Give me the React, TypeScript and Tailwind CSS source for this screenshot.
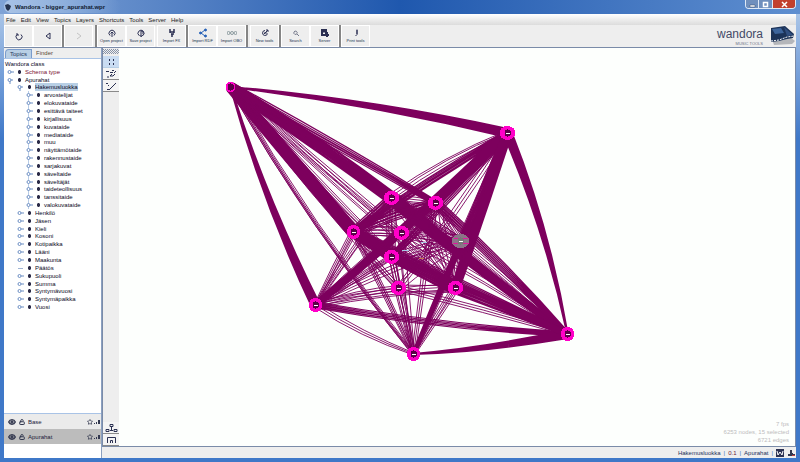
import React, { useMemo, useState } from "react";
import { Eye, LockOpen, Star } from "lucide-react";

/* ---------- graph data ---------- */

type GraphNode = { id: string; x: number; y: number; r: number; dim?: boolean };

// from, to, bend, width at start, width at end, number of strands
type Bundle = [string, string, number, number, number, number];

const NODES: GraphNode[] = [
  { id: "A", x: 231, y: 87, r: 5 },
  { id: "B", x: 508, y: 133, r: 8 },
  { id: "C", x: 392, y: 198, r: 8 },
  { id: "D", x: 436, y: 203, r: 8 },
  { id: "E", x: 354, y: 232, r: 7 },
  { id: "F", x: 402, y: 233, r: 8 },
  { id: "G", x: 461, y: 241, r: 9, dim: true },
  { id: "H", x: 392, y: 257, r: 8 },
  { id: "I", x: 399, y: 288, r: 8 },
  { id: "J", x: 456, y: 288, r: 8 },
  { id: "K", x: 316, y: 305, r: 7 },
  { id: "L", x: 568, y: 334, r: 7 },
  { id: "M", x: 414, y: 354, r: 7 },
];

const BUNDLES: Bundle[] = [
  ["A", "B", -4, 1, 9, 12],
  ["A", "K", 5, 1, 9, 12],
  ["B", "L", -5, 9, 1, 12],
  ["K", "L", 4, 6, 4, 7],
  ["K", "M", 3, 5, 2, 3],
  ["M", "L", 3, 1, 9, 11],
  ["A", "C", -2, 10, 12, 18],
  ["A", "D", -1, 9, 5, 7],
  ["A", "E", 0, 10, 12, 18],
  ["A", "F", 1, 6, 6, 4],
  ["A", "G", 0, 6, 6, 3],
  ["A", "H", 2, 7, 7, 6],
  ["A", "I", 3, 4, 5, 3],
  ["A", "J", 1, 6, 8, 4],
  ["A", "M", 7, 4, 3, 6],
  ["B", "C", 4, 5, 9, 4],
  ["B", "D", 0, 9, 7, 11],
  ["B", "E", 2, 6, 7, 9],
  ["B", "F", -2, 5, 4, 4],
  ["B", "G", 0, 8, 7, 6],
  ["B", "H", -1, 7, 6, 7],
  ["B", "I", -2, 5, 5, 3],
  ["B", "J", 0, 9, 8, 13],
  ["B", "K", -2, 10, 6, 14],
  ["B", "M", 0, 7, 3, 8],
  ["C", "L", 2, 13, 5, 17],
  ["D", "L", -2, 9, 4, 8],
  ["E", "L", 1, 10, 5, 9],
  ["F", "L", -3, 12, 4, 4],
  ["G", "L", -1, 6, 3, 4],
  ["H", "L", 1, 6, 5, 4],
  ["I", "L", -1, 5, 3, 3],
  ["J", "L", 0, 11, 5, 12],
  ["K", "C", -1, 3, 5, 4],
  ["K", "D", -2, 4, 6, 5],
  ["K", "E", 0, 3, 6, 5],
  ["K", "F", 2, 4, 4, 4],
  ["K", "G", -2, 3, 8, 3],
  ["K", "H", 0, 5, 5, 6],
  ["K", "I", -2, 3, 5, 3],
  ["K", "J", -3, 6, 8, 4],
  ["M", "C", -2, 3, 5, 2],
  ["M", "D", -1, 3, 5, 3],
  ["M", "E", 1, 3, 5, 5],
  ["M", "F", 0, 2, 5, 2],
  ["M", "G", 2, 3, 5, 2],
  ["M", "H", 0, 2, 5, 3],
  ["M", "I", 0, 2, 8, 3],
  ["M", "J", 0, 3, 7, 5],
  ["C", "D", 0, 6, 6, 4],
  ["C", "E", 0, 8, 8, 7],
  ["C", "G", 0, 8, 6, 6],
  ["C", "H", 1, 8, 8, 4],
  ["C", "J", -2, 9, 9, 4],
  ["D", "E", 2, 9, 9, 7],
  ["D", "F", 1, 8, 8, 6],
  ["D", "G", 0, 6, 6, 5],
  ["D", "J", 3, 12, 9, 4],
  ["E", "F", -1, 8, 8, 4],
  ["E", "G", -4, 9, 9, 4],
  ["E", "H", 0, 10, 10, 11],
  ["E", "I", 2, 5, 5, 4],
  ["E", "J", 1, 10, 13, 13],
  ["F", "G", 1, 10, 12, 4],
  ["F", "J", -1, 9, 12, 4],
  ["G", "H", 1, 10, 8, 4],
  ["G", "I", 2, 9, 6, 2],
  ["G", "J", 0, 12, 9, 6],
  ["H", "I", 0, 5, 5, 3],
  ["H", "J", 0, 9, 12, 11],
  ["I", "J", 1, 6, 6, 2],
];

function bundlePath([from, to, bend, w0, w1, strands]: Bundle) {
  const a = NODES.find((n) => n.id === from)!;
  const b = NODES.find((n) => n.id === to)!;
  const dx = b.x - a.x;
  const dy = b.y - a.y;
  const len = Math.hypot(dx, dy);
  const nx = -dy / len;
  const ny = dx / len;
  let d = "";
  for (let i = 0; i < strands; i++) {
    const t = i / (strands - 1) - 0.5;
    const s = t * w0;
    const e = t * w1;
    // small repeatable wobble so strands do not run perfectly parallel
    const c = bend * 2 + (s + e) / 2 + (((i * 7) % 5) - 2) / 2;
    const cx = (a.x + b.x) / 2 + nx * c;
    const cy = (a.y + b.y) / 2 + ny * c;
    d += `M${(a.x + nx * s).toFixed(1)} ${(a.y + ny * s).toFixed(1)}`;
    d += `Q${cx.toFixed(1)} ${cy.toFixed(1)} ${(b.x + nx * e).toFixed(1)} ${(b.y + ny * e).toFixed(1)}`;
  }
  return d;
}

function Graph() {
  const paths = useMemo(() => BUNDLES.map(bundlePath), []);
  return (
    <svg className="block h-full w-full" viewBox="120 48 675 398" aria-label="Topic graph" role="img">
      <g fill="none" stroke="#7d005d">
        {paths.map((d, i) => (
          <path key={i} d={d} strokeWidth={BUNDLES[i][5] > 6 ? 1.2 : 0.9} />
        ))}
      </g>
      {NODES.map((n) => (
        <g key={n.id} shapeRendering="crispEdges">
          <ellipse cx={n.x} cy={n.y} rx={n.r} ry={Math.min(n.r, 7)} fill={n.dim ? "#8c7488" : "#ff00c8"} />
          {n.dim && <path d={`M${n.x - 8} ${n.y + 2.5}h16M${n.x - 7} ${n.y - 2.5}h14`} stroke="#e0189f" />}
          <path
            d={`M${n.x} ${n.y - 4}L${n.x + 3} ${n.y - 2}V${n.y + 2}L${n.x} ${n.y + 4}L${n.x - 3} ${n.y + 2}V${n.y - 2}Z`}
            fill={n.dim ? "#777777" : "#5c0048"}
          />
          {n.id !== "A" && <path d={`M${n.x - 2} ${n.y + 0.5}h4`} stroke="#ffffff" />}
        </g>
      ))}
      <path d="M402 250h7M421 242h6" stroke="#a9c8e6" shapeRendering="crispEdges" />
      <path d="M419 258h5" stroke="#c87848" shapeRendering="crispEdges" />
    </svg>
  );
}

/* ---------- title bar ---------- */

function TitleBar() {
  return (
    <header className="flex h-[14px] shrink-0 items-start justify-between bg-linear-to-r from-[#7fa3d6] via-[#1f58ae] to-[#5f8fd0] pl-1">
      <div className="flex h-[13px] items-center gap-[3px] rounded-full bg-linear-to-r from-[#a9c3e6] via-[#8fb0dd] to-transparent pr-4">
        <svg className="h-2 w-2" viewBox="0 0 8 8" aria-hidden="true">
          <path d="M1 2l3-1 3 2-1 3-2 2-2-2z" fill="#26344f" />
        </svg>
        <h1 className="text-[6px] leading-none font-bold text-[#101c30]">Wandora - bigger_apurahat.wpr</h1>
      </div>
      <div className="mr-1 flex h-[9px] overflow-hidden rounded-b-sm border border-t-0 border-[#dfe9f6] text-white">
        <button type="button" aria-label="Minimize" className="flex w-[13px] items-center justify-center border-r border-[#dfe9f6] bg-[#6f8fbd]">
          <svg className="h-[7px] w-[9px]" viewBox="0 0 9 7"><path d="M2 4h5v2H2z" fill="#fff" stroke="#34496b" strokeWidth=".5" /></svg>
        </button>
        <button type="button" aria-label="Maximize" className="flex w-[14px] items-center justify-center border-r border-[#dfe9f6] bg-[#6f8fbd]">
          <svg className="h-[7px] w-[9px]" viewBox="0 0 9 7"><path d="M2.500 1.500h4v4h-4z" fill="none" stroke="#fff" strokeWidth="1.500" /></svg>
        </button>
        <button type="button" aria-label="Close" className="flex w-[22px] items-center justify-center bg-[#c2402e]">
          <svg className="h-[7px] w-[9px]" viewBox="0 0 9 7"><path d="M2 1l5 5M7 1l-5 5" stroke="#fff" strokeWidth="1.500" /></svg>
        </button>
      </div>
    </header>
  );
}

const MENUS = ["File", "Edit", "View", "Topics", "Layers", "Shortcuts", "Tools", "Server", "Help"];

function MenuBar() {
  return (
    <nav className="flex h-[11px] shrink-0 items-center gap-[5px] bg-linear-to-b from-white to-[#dcdcdc] px-[2px]">
      {MENUS.map((m) => (
        <button key={m} type="button" className="text-[6px] leading-none text-[#222222]">
          {m}
        </button>
      ))}
    </nav>
  );
}

/* ---------- toolbar ---------- */

const ICONS: Record<string, React.ReactNode> = {
  reload: <path d="M7 3.500A3 3 0 1 1 3.500 3.200M2 3h2v2" />,
  back: <path d="M7 2v6L3 5z" />,
  forward: <path d="M3 2l4 3-4 3" stroke="#c4c4c4" />,
  open: <path d="M3 7.500A3 3 0 1 1 7 7.500M5 9V4M3.500 5.500L5 4l1.500 1.500" />,
  save: <path d="M3 7.500A3 3 0 1 1 7 7.500M5 3v6M3.500 7L5 8.500 7 7M5 3h2v3" />,
  fx: <path d="M2 2h2M6 2h2M3 4h4M4 6h3M5 6v3M3 3v2M7 3v2" strokeWidth="1.500" />,
  rdf: (
    <g stroke="#2460b8" fill="#2460b8">
      <path d="M3 5l4-3M3 5l4 3" fill="none" />
      <circle cx="2.500" cy="5" r="1" />
      <circle cx="7.500" cy="2" r="1" />
      <circle cx="7.500" cy="8" r="1" />
    </g>
  ),
  obo: (
    <g stroke="#8b9a9e">
      <circle cx="1.500" cy="5" r="1.500" />
      <circle cx="5" cy="5" r="1.500" />
      <circle cx="8.500" cy="5" r="1.500" />
    </g>
  ),
  tools: <path d="M5 2.500a2.500 2.500 0 1 0 2.500 3M4 6l4-4M6 2h2v2M4 5h3" />,
  search: <path d="M3 4a1.500 1.500 0 1 1 3 1.500A1.500 1.500 0 0 1 3 4M6 6l2 2" stroke="#777b8c" />,
  server: <path d="M2 2h4v5H2zM3 3.500h2M7 4v5M5 7h4" strokeWidth="2" />,
  print: <path d="M6 1.500v5L4.500 8M6 2v4" />,
};

type Tool = { icon: string; label?: string; name: string };

const TOOL_GROUPS: (Tool | "|")[][] = [
  [{ icon: "reload", name: "Reload" }, { icon: "back", name: "Back" }, "|", { icon: "forward", name: "Forward" }],
  ["|", { icon: "open", label: "Open project", name: "Open project" }, { icon: "save", label: "Save project", name: "Save project" }],
  [
    { icon: "fx", label: "Import FX", name: "Import FX" },
    "|",
    { icon: "rdf", label: "Import RDF", name: "Import RDF" },
    { icon: "obo", label: "Import OBO", name: "Import OBO" },
    "|",
  ],
  [
    { icon: "tools", label: "New tools", name: "New tools" },
    "|",
    { icon: "search", label: "Search", name: "Search" },
    { icon: "server", label: "Server", name: "Server" },
    "|",
    { icon: "print", label: "Print tools", name: "Print tools" },
  ],
];

function ToolButton({ tool }: { tool: Tool }) {
  return (
    <button
      type="button"
      aria-label={tool.name}
      className="flex w-[29px] flex-col items-center justify-center border border-white bg-[#eeeeee]"
    >
      <svg className="h-[10px] w-[10px]" viewBox="0 0 10 10" fill="none" stroke="#2b2f52" strokeWidth="1" aria-hidden="true">
        {ICONS[tool.icon]}
      </svg>
      {tool.label && <span className="text-[4px] leading-[6px] whitespace-nowrap text-[#20304c]">{tool.label}</span>}
    </button>
  );
}

function Logo() {
  return (
    <div className="flex items-center gap-[6px]">
      <div className="flex flex-col items-end">
        <span className="text-[12px] leading-[14px] text-[#434a66]">wandora</span>
        <span className="text-[4px] leading-[5px] text-[#6a7085]">MUSIC TOOLS</span>
      </div>
      <svg className="h-[20px] w-[27px]" viewBox="0 0 25 20" aria-hidden="true">
        <path d="M2 13l9 1 9-3 5 4-3 3-18 1z" fill="#b4b6ba" />
        <path d="M1 2l14-2 9 8-1 4-6 1-8 2-8 1z" fill="#1c3358" />
        <path d="M2 3l9-1 3 5-9 1z" fill="#3d659c" />
        <path d="M14 1l9 8-6 1z" fill="#304f80" />
        <path d="M1 15l8-1 8-3 7-1" fill="none" stroke="#f4f6fa" strokeDasharray="2 1" />
      </svg>
    </div>
  );
}

function ToolBar() {
  return (
    <div className="flex h-[22px] shrink-0 items-stretch justify-between bg-[#eeeeee]">
      <div className="flex gap-[2px]">
        {TOOL_GROUPS.map((group, g) => (
          <div key={g} className="flex">
            {group.map((t, i) =>
              t === "|" ? <span key={i} className="w-[2px] bg-[#858585]" /> : <ToolButton key={i} tool={t} />
            )}
          </div>
        ))}
      </div>
      <Logo />
    </div>
  );
}

/* ---------- topic tree ---------- */

type Row = { label: string; depth: number; open?: boolean; leaf?: boolean; color?: string };

const child = (label: string): Row => ({ label, depth: 3 });
const top = (label: string): Row => ({ label, depth: 2 });

const ROWS: Row[] = [
  { label: "Wandora class", depth: 0 },
  { label: "Schema type", depth: 1, color: "text-[#7a1030]" },
  { label: "Apurahat", depth: 1, open: true },
  { label: "Hakemusluokka", depth: 2, open: true },
  child("arvostelijat"),
  child("elokuvataide"),
  child("esittävä taiteet"),
  child("kirjallisuus"),
  child("kuvataide"),
  child("mediataide"),
  child("muu"),
  child("näyttämötaide"),
  child("rakennustaide"),
  child("sarjakuvat"),
  child("säveltaide"),
  child("säveltäjät"),
  child("taideteollisuus"),
  child("tanssitaide"),
  child("valokuvataide"),
  top("Henkilö"),
  top("Jäsen"),
  top("Kieli"),
  top("Kosoni"),
  top("Kotipaikka"),
  top("Lääni"),
  top("Maakunta"),
  { label: "Päätös", depth: 2, leaf: true },
  top("Sukupuoli"),
  top("Summa"),
  top("Syntymävuosi"),
  top("Syntymäpaikka"),
  top("Vuosi"),
];

const INDENT = ["pl-px", "pl-[3px]", "pl-[13px]", "pl-[22px]"];

function TreeRow({ row, selected, onSelect }: { row: Row; selected: boolean; onSelect: () => void }) {
  return (
    <li className={`flex min-h-0 items-center ${INDENT[row.depth]}`}>
      {row.depth > 0 && (
        <svg className="h-[8px] w-[17px] shrink-0" viewBox="0 0 17 8" fill="none" aria-hidden="true">
          {row.depth === 3 && <path d="M2.500 0v8" stroke="#b7cbe6" />}
          {row.leaf ? (
            <path d="M1 4.500h5" stroke="#9fb4d4" />
          ) : (
            <>
              <circle cx="2.500" cy="4" r="1.500" stroke="#6d8fc4" fill="#ffffff" />
              <path d={row.open ? "M4 4h2M3 5v3" : "M4 4h3"} stroke="#6d8fc4" />
            </>
          )}
          <path d="M12.500 2v4M11 4h3" stroke="#2b2b48" strokeWidth="2" />
        </svg>
      )}
      <button
        type="button"
        onClick={onSelect}
        className={`h-[8px] text-[6px] leading-[8px] whitespace-nowrap ${row.color ?? "text-[#08081c]"} ${
          selected ? "bg-[#b8cfe5]" : ""
        } ${row.depth > 0 ? "ml-px" : ""}`}
      >
        {row.label}
      </button>
    </li>
  );
}

function Layer({ name, active }: { name: string; active?: boolean }) {
  return (
    <div className={`flex h-[15px] items-center justify-between pr-px pl-1 ${active ? "bg-[#bcbcbc]" : "bg-[#ebebeb]"}`}>
      <div className="flex items-center gap-[3px] text-[#33384f]">
        <Eye size={8} strokeWidth={4} />
        <LockOpen size={6} strokeWidth={4} />
        <span className="text-[6px] leading-[8px] text-[#20203a]">{name}</span>
      </div>
      <div className="flex items-center gap-px text-[#33384f]">
        <Star size={6} strokeWidth={3} />
        <svg className="h-[6px] w-[6px]" viewBox="0 0 6 6" aria-hidden="true">
          <path d="M0 4h1v1H0zM2 3h1v2H2zM4 1h2v4H4z" fill="currentColor" />
        </svg>
      </div>
    </div>
  );
}

function SidePanel() {
  const [selected, setSelected] = useState("Hakemusluokka");
  return (
    <aside className="flex w-[98px] shrink-0 flex-col border-r border-[#8ba0c0] bg-white">
      <div className="flex h-[11px] items-end gap-1 border-b border-[#a9c3e6] bg-[#eeeeee] pl-px text-[6px]" role="tablist">
        <button type="button" role="tab" aria-selected="true" className="h-[9px] w-[27px] rounded-tl-sm border border-b-0 border-[#7a9ccc] bg-[#b8cfe5] leading-[8px] text-[#26375c]">
          Topics
        </button>
        <button type="button" role="tab" aria-selected="false" className="h-[9px] leading-[9px] text-[#5a4a38]">
          Finder
        </button>
      </div>
      <ul className="mt-px grid h-[251px] shrink-0 auto-rows-fr">
        {ROWS.map((r) => (
          <TreeRow key={r.label} row={r} selected={selected === r.label} onSelect={() => setSelected(r.label)} />
        ))}
      </ul>
      <div className="mt-auto mb-[14px] border-t border-[#a9c3e6]">
        <Layer name="Base" />
        <Layer name="Apurahat" active />
      </div>
    </aside>
  );
}

/* ---------- graph tool strip ---------- */

function StripButton({ name, active, d }: { name: string; active?: boolean; d: string }) {
  return (
    <button
      type="button"
      aria-label={name}
      className={`flex h-[12px] items-center justify-center border-b ${active ? "border-[#b8cfe5] bg-[#c9dcf2]" : "border-[#8a8a8a] bg-[#f4f4f4]"}`}
    >
      <svg className="h-[10px] w-[13px]" viewBox="0 0 13 10" fill="none" stroke="#2b3152" aria-hidden="true">
        <path d={d} />
      </svg>
    </button>
  );
}

function ToolStrip() {
  return (
    <div className="flex w-[16px] shrink-0 flex-col bg-[#eeeeee] pt-px">
      <svg className="h-[5px] w-full" aria-hidden="true">
        <defs>
          <pattern id="grip" width="2" height="2" patternUnits="userSpaceOnUse">
            <rect width="1" height="1" fill="#8793a8" />
            <rect x="1" y="1" width="1" height="1" fill="#8793a8" />
          </pattern>
        </defs>
        <rect width="100%" height="100%" fill="url(#grip)" />
      </svg>
      <div className="mt-[2px] flex flex-col">
        <StripButton name="Move" active d="M4.500 2v2M4.500 6v2M8.500 2v2M8.500 6v2" />
        <StripButton name="Select" d="M1 2.500h3M5 3.500h3M7 1.500h2M9 4l2-2M7 5l-2 2h3l2-2M2 8h2" />
        <StripButton name="Draw" d="M1 2.500h2M3 4l1 1M2 8.500h3M5 8l6-6" />
      </div>
      <div className="mt-auto flex flex-col">
        <StripButton name="Layout" d="M5 1.500h3v2H5zM1 6.500h3v2H1zM9 6.500h3v2H9zM6.500 4v3M5 7.500h3" />
        <StripButton name="Fit" d="M2.500 8V2.500h8V8M5.500 8V5.500h2V8" />
      </div>
    </div>
  );
}

function StatusBar() {
  return (
    <footer className="flex h-[11px] shrink-0 items-center justify-end gap-[3px] bg-[#eeeeee] text-[6px] leading-[8px] text-[#24305a]">
      <span>Hakemusluokka</span>
      <span className="text-[#3b6fc0]">|</span>
      <span className="text-[#6a2038]">0.1</span>
      <span className="text-[#3b6fc0]">|</span>
      <span>Apurahat</span>
      <span className="text-[#3b6fc0]">|</span>
      <svg className="h-[8px] w-[8px]" viewBox="0 0 8 8" aria-hidden="true">
        <path d="M0 0h8v8H0z" fill="#2b3152" />
        <path d="M1 2l1 4 2-3 2 3 1-4" fill="none" stroke="#fff" />
      </svg>
      <svg className="h-[8px] w-[9px]" viewBox="0 0 9 8" aria-hidden="true">
        <path d="M1 5h2V1h2v3h1v1h2v2H1z" fill="#33384f" />
        <path d="M5 6h3v1H5z" fill="#c24040" />
      </svg>
    </footer>
  );
}

export default function App() {
  return (
    <div
      className="flex h-screen flex-col overflow-hidden bg-linear-to-b from-[#b5cdea] via-[#3f78c8] via-30% to-[#3f78c8]"
      style={{ fontFamily: '"Liberation Sans", Arial, sans-serif' }}
    >
      <TitleBar />
      <div className="mx-1 mb-1 flex min-h-0 flex-1 flex-col bg-[#eeeeee]">
        <MenuBar />
        <ToolBar />
        <div className="flex min-h-0 flex-1 border-t border-[#7a8ba8]">
          <SidePanel />
          <div className="flex min-w-0 flex-1 flex-col">
            <div className="flex min-h-0 flex-1 border-x border-b border-[#7a8ba8]">
              <ToolStrip />
              <main className="relative min-w-0 flex-1 bg-[#fdfffd]">
                <Graph />
                <div className="absolute right-[6px] bottom-[2px] text-right text-[6px] leading-[8px] text-[#bdbdbd]">
                  <p>7 fps</p>
                  <p>6253 nodes, 15 selected</p>
                  <p>6721 edges</p>
                </div>
              </main>
            </div>
            <StatusBar />
          </div>
        </div>
      </div>
    </div>
  );
}
